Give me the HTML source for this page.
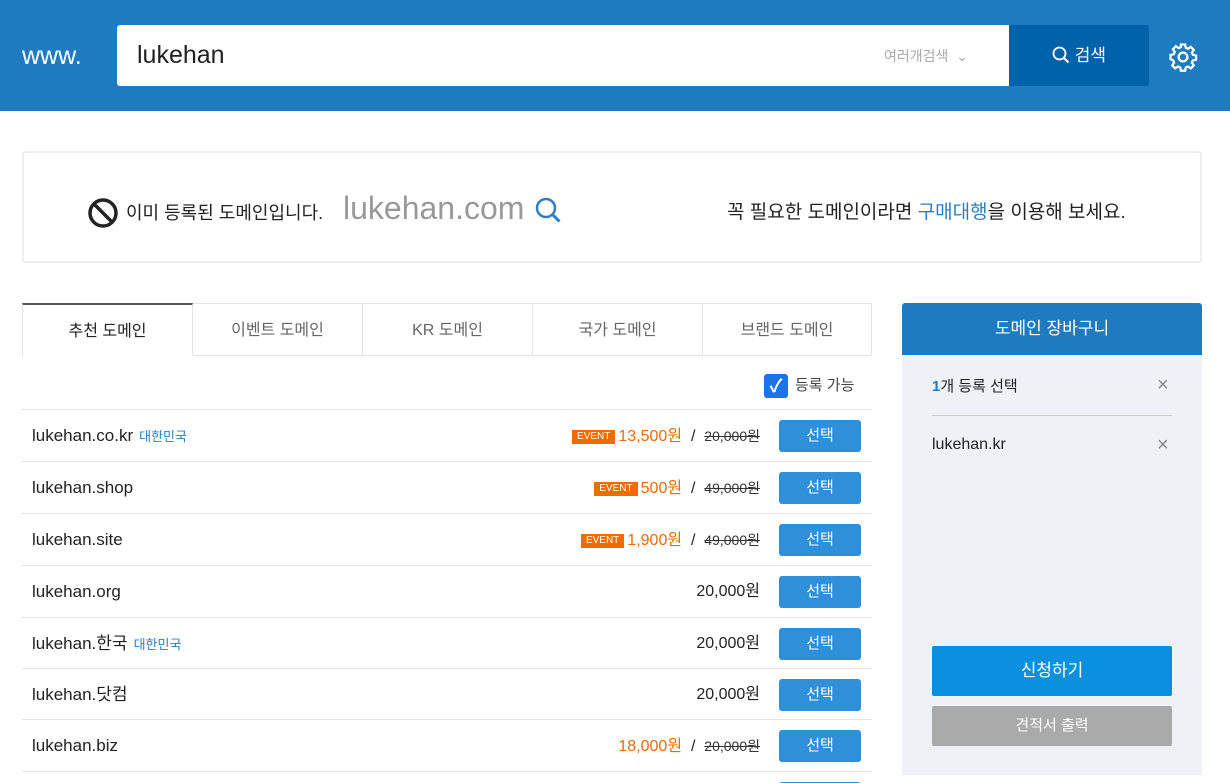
<!DOCTYPE html>
<html style="width:1230px;height:783px;overflow:hidden"><head><meta charset="utf-8"><style>
*{box-sizing:border-box;margin:0;padding:0}
body{width:1230px;height:783px;overflow:hidden;background:#fff;font-family:"Liberation Sans","Noto Sans CJK KR",sans-serif;color:#222;position:relative}
.abs{position:absolute}
.top{left:0;top:0;width:1230px;height:111px;background:#1f7bc0}
.row{position:absolute;left:22px;width:850px;height:52px;border-top:1px solid #e3e3e3;font-size:17px;line-height:52px}
.row .d{position:absolute;left:10px;top:0;height:52px;line-height:52px;white-space:nowrap}
.row .c{color:#2a7fc4;font-size:13px;margin-left:6px}
.row .p{position:absolute;right:112px;top:0;height:52px;line-height:52px;font-size:16px;white-space:nowrap}
.ev{display:inline-block;background:#f06b00;color:#fff;font-size:10px;padding:0 5px;line-height:14px;vertical-align:2px;margin-right:3px}
.o{color:#f06b00}
.s{text-decoration:line-through;font-size:14px;color:#333}
.btn{position:absolute;right:11px;top:10px;width:82px;height:32px;background:#2f8fd8;color:#fff;border-radius:3px;text-align:center;line-height:32px;font-size:15px}
.tab{position:absolute;top:303px;height:53px;width:170px;text-align:center;line-height:53px;font-size:16px;color:#666;border:1px solid #e3e3e3;border-left:none;background:#fff}
</style></head><body>
<div class="abs top"></div>
<div class="abs" style="left:22px;top:42px;color:#fff;font-size:25px">www.</div>
<div class="abs" style="left:117px;top:25px;width:892px;height:61px;background:#fff;border-radius:3px 0 0 3px"></div>
<div class="abs" style="left:137px;top:41px;font-size:25px;color:#222">lukehan</div>
<div class="abs" style="left:884px;top:46px;font-size:14px;color:#aaa">여러개검색 &nbsp;⌄</div>
<div class="abs" style="left:1009px;top:25px;width:140px;height:61px;background:#0062a8;border-radius:0 3px 3px 0;color:#fff;font-size:17px;text-align:center;line-height:61px">
<svg width="18" height="18" viewBox="0 0 18 18" style="vertical-align:-3px"><circle cx="7.5" cy="7.5" r="6" fill="none" stroke="#fff" stroke-width="1.8"/><path d="M12 12l4.5 4.5" stroke="#fff" stroke-width="2"/></svg> 검색</div>
<svg class="abs" style="left:1168px;top:42px" width="30" height="30" viewBox="0 0 24 24"><path fill="none" stroke="#fff" stroke-width="1.8" d="M12 8.5a3.5 3.5 0 1 0 0 7a3.5 3.5 0 1 0 0-7zM10.3 2h3.4l.5 2.6 1.8.8 2.2-1.5 2.4 2.4-1.5 2.2.8 1.8 2.6.5v3.4l-2.6.5-.8 1.8 1.5 2.2-2.4 2.4-2.2-1.5-1.8.8-.5 2.6h-3.4l-.5-2.6-1.8-.8-2.2 1.5-2.4-2.4 1.5-2.2-.8-1.8L2 13.7v-3.4l2.6-.5.8-1.8-1.5-2.2 2.4-2.4 2.2 1.5 1.8-.8z"/></svg>

<div class="abs" style="left:22px;top:151px;width:1180px;height:112px;border:2px solid #eee;border-radius:3px"></div>
<svg class="abs" style="left:87px;top:197px" width="32" height="32" viewBox="0 0 32 32"><circle cx="16" cy="16" r="13" fill="none" stroke="#222" stroke-width="3.5"/><path d="M7 7l18 18" stroke="#222" stroke-width="3.5"/></svg>
<div class="abs" style="left:126px;top:199px;font-size:18px">이미 등록된 도메인입니다.</div>
<div class="abs" style="left:343px;top:190px;font-size:32px;color:#999">lukehan.com</div>
<svg class="abs" style="left:534px;top:196px" width="28" height="28" viewBox="0 0 28 28"><circle cx="12" cy="12" r="9" fill="none" stroke="#2a7fc4" stroke-width="2.5"/><path d="M18.5 18.5l7 7" stroke="#2a7fc4" stroke-width="3"/></svg>
<div class="abs" style="left:727px;top:197px;font-size:19px">꼭 필요한 도메인이라면 <span style="color:#2a7fc4">구매대행</span>을 이용해 보세요.</div>

<div class="tab" style="left:22px;border-left:1px solid #e3e3e3;border-top:2px solid #555;border-bottom:none;color:#222;width:171px">추천 도메인</div>
<div class="tab" style="left:193px">이벤트 도메인</div>
<div class="tab" style="left:363px">KR 도메인</div>
<div class="tab" style="left:533px">국가 도메인</div>
<div class="tab" style="left:703px;width:169px">브랜드 도메인</div>

<div class="abs" style="left:764px;top:374px;width:24px;height:24px;background:#1a73e8;border-radius:3px;color:#fff;text-align:center;line-height:24px;font-size:18px;font-weight:bold">✓</div>
<div class="abs" style="left:795px;top:374px;font-size:15px;color:#444">등록 가능</div>

<div class="row" style="top:409px"><div class="d">lukehan.co.kr<span class="c">대한민국</span></div><div class="p"><span class="ev">EVENT</span><span class="o">13,500원</span> &nbsp;/&nbsp; <span class="s">20,000원</span></div><div class="btn">선택</div></div>
<div class="row" style="top:461px"><div class="d">lukehan.shop</div><div class="p"><span class="ev">EVENT</span><span class="o">500원</span> &nbsp;/&nbsp; <span class="s">49,000원</span></div><div class="btn">선택</div></div>
<div class="row" style="top:513px"><div class="d">lukehan.site</div><div class="p"><span class="ev">EVENT</span><span class="o">1,900원</span> &nbsp;/&nbsp; <span class="s">49,000원</span></div><div class="btn">선택</div></div>
<div class="row" style="top:565px"><div class="d">lukehan.org</div><div class="p">20,000원</div><div class="btn">선택</div></div>
<div class="row" style="top:617px"><div class="d">lukehan.한국<span class="c">대한민국</span></div><div class="p">20,000원</div><div class="btn">선택</div></div>
<div class="row" style="top:668px"><div class="d">lukehan.닷컴</div><div class="p">20,000원</div><div class="btn">선택</div></div>
<div class="row" style="top:719px"><div class="d">lukehan.biz</div><div class="p"><span class="o">18,000원</span> &nbsp;/&nbsp; <span class="s">20,000원</span></div><div class="btn">선택</div></div>
<div class="row" style="top:771px;height:12px;overflow:hidden"><div class="btn">선택</div></div>

<div class="abs" style="left:902px;top:303px;width:300px;height:52px;background:#1f7bc0;border-radius:3px 3px 0 0;color:#fff;font-size:17px;text-align:center;line-height:52px">도메인 장바구니</div>
<div class="abs" style="left:902px;top:355px;width:300px;height:420px;background:#eef1f6"></div>
<div class="abs" style="left:932px;top:375px;font-size:15px"><b style="color:#1f7bc0">1</b>개 등록 선택</div>
<div class="abs" style="left:1157px;top:374px;font-size:20px;color:#888">×</div>
<div class="abs" style="left:932px;top:415px;width:240px;height:1px;background:#ccc"></div>
<div class="abs" style="left:932px;top:436px;font-size:16px">lukehan.kr</div>
<div class="abs" style="left:1157px;top:434px;font-size:20px;color:#888">×</div>
<div class="abs" style="left:932px;top:646px;width:240px;height:50px;background:#0a90de;border-radius:2px;color:#fff;font-size:17px;text-align:center;line-height:50px">신청하기</div>
<div class="abs" style="left:932px;top:706px;width:240px;height:40px;background:#aaa;border-radius:2px;color:#fff;font-size:15px;text-align:center;line-height:40px">견적서 출력</div>
</body></html>
